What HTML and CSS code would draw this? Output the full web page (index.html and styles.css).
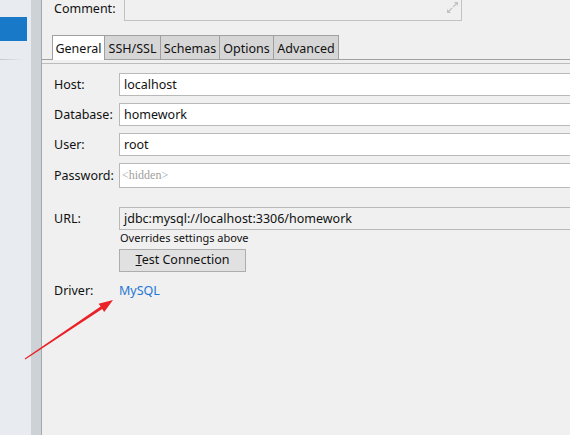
FILE: index.html
```html
<!DOCTYPE html>
<html>
<head>
<meta charset="utf-8">
<link rel="stylesheet" href="styles.css">
</head>
<body>
<div class="app">
  <aside class="sidebar">
    <div class="sel"></div>
    <div class="sep"></div>
  </aside>
  <div class="splitter"></div>
  <main class="main">
    <div class="comment-row">
      <span class="lbl comment-lbl">Comment:</span>
      <div class="textarea">
        <svg class="resize" width="13" height="13" viewBox="0 0 13 13">
          <path d="M7 6 L11.5 1.5" stroke="#c2c2c2" stroke-width="1.2" fill="none"/>
          <polygon points="8,1 12,1 12,5" fill="#c2c2c2"/>
          <path d="M6 7 L1.5 11.5" stroke="#c2c2c2" stroke-width="1.2" fill="none"/>
          <polygon points="1,8 1,12 5,12" fill="#c2c2c2"/>
        </svg>
      </div>
    </div>
    <div class="tabs">
      <div class="tab active t-general">General</div>
      <div class="tab t-ssh">SSH/SSL</div>
      <div class="tab t-schemas">Schemas</div>
      <div class="tab t-options">Options</div>
      <div class="tab t-adv">Advanced</div>
    </div>
    <div class="panel">
      <div class="row"><span class="lbl">Host:</span><div class="input">localhost</div></div>
      <div class="row"><span class="lbl">Database:</span><div class="input">homework</div></div>
      <div class="row"><span class="lbl">User:</span><div class="input">root</div></div>
      <div class="row pw"><span class="lbl">Password:</span><div class="input pw-input"><span class="hidden">&lt;hidden&gt;</span></div></div>
      <div class="row url"><span class="lbl">URL:</span><div class="input ro">jdbc:mysql://localhost:3306/homework</div></div>
      <div class="hint">Overrides settings above</div>
      <div class="btn-row"><button class="btn"><u>T</u>est Connection</button></div>
      <div class="driver-row"><span class="lbl">Driver:</span><span class="link">MySQL</span></div>
    </div>
  </main>
  <svg class="arrow" width="570" height="435" viewBox="0 0 570 435">
    <polygon points="24.7,358.6 100.6,306.6 98.6,303.7 113,300 104.2,312 102.2,309 25.3,359.4" fill="#ea2227"/>
  </svg>
</div>
</body>
</html>
```

FILE: styles.css
```css
* { box-sizing: border-box; }
html, body {
  margin: 0;
  padding: 0;
  width: 570px;
  height: 435px;
  overflow: hidden;
  background: #f0f0f0;
}
body {
  font-family: "Noto Sans", "Open Sans", sans-serif;
  font-size: 12.5px;
  color: #111;
}
.app {
  position: relative;
  display: flex;
  width: 570px;
  height: 435px;
}
.sidebar {
  width: 31px;
  background: #e8ecf0;
  display: flex;
  flex-direction: column;
}
.sel {
  margin-top: 17px;
  width: 27px;
  height: 24px;
  background: #1879c9;
}
.sep {
  margin-top: 18px;
  width: 24px;
  height: 1px;
  background: linear-gradient(to right, #c4c8cc, rgba(196,200,204,0));
}
.splitter {
  width: 11px;
  background: #cdd2d7;
  border-right: 1px solid #a3a8ad;
}
.main {
  flex: 1;
  background: #f0f0f0;
  overflow: hidden;
}
.comment-row {
  display: flex;
  height: 21px;
}
.lbl {
  display: inline-block;
  width: 65px;
  flex-shrink: 0;
  line-height: 16px;
  white-space: nowrap;
}
.comment-lbl {
  width: 70px;
  margin-left: 12px;
  margin-top: 1px;
}
.textarea {
  width: 338px;
  height: 21px;
  flex-shrink: 0;
  border: 1px solid #c2c2c2;
  border-top: none;
  background: #f0f0f0;
  display: flex;
  justify-content: flex-end;
  align-items: flex-start;
  padding: 1px 2px 0 0;
}
.tabs {
  display: flex;
  margin-top: 14px;
  padding-left: 10px;
  height: 25px;
  border-bottom: 1px solid #a0a0a0;
}
.tab {
  height: 24px;
  border: 1px solid #a0a0a0;
  border-bottom: none;
  background: #d6d6d6;
  text-align: center;
  line-height: 23px;
  padding-top: 1px;
  margin-left: -1px;
  white-space: nowrap;
}
.tab.active {
  background: #ffffff;
  height: 25px;
  margin-left: 0;
  position: relative;
  z-index: 1;
}
.t-general { width: 53px; }
.t-ssh { width: 57px; }
.t-schemas { width: 60px; }
.t-options { width: 55px; }
.t-adv { width: 66px; }
.panel {
  margin-top: 3px;
  border-top: 1px solid #bcbcbc;
  padding: 9px 0 0 12px;
}
.row {
  display: flex;
  align-items: center;
  height: 23px;
  margin-bottom: 7px;
}
.row.pw { height: 25px; margin-bottom: 19px; }
.row.url { margin-bottom: 0; }
.input {
  width: 470px;
  height: 100%;
  flex-shrink: 0;
  border: 1px solid #b9b9b9;
  background: #ffffff;
  padding-left: 4px;
  line-height: 21px;
  color: #111;
  white-space: nowrap;
}
.input.pw-input { padding-left: 2px; }
.input.ro { background: #f0f0f0; }
.hidden {
  font-family: "Liberation Serif", "DejaVu Serif", serif;
  font-size: 12px;
  color: #a0a0a0;
  line-height: 23px;
}
.hint {
  margin: 1px 0 0 66px;
  font-size: 11px;
  line-height: 14px;
}
.btn-row {
  margin: 4px 0 0 65px;
  display: flex;
}
.btn {
  display: block;
  width: 127px;
  height: 23px;
  background: #e1e1e1;
  border: 1px solid #adadad;
  font-family: "Noto Sans", "Open Sans", sans-serif;
  font-size: 12.5px;
  color: #111;
  padding: 0 0 2px 0;
  line-height: 19px;
}
.driver-row {
  display: flex;
  margin-top: 11px;
  line-height: 16px;
}
.link { color: #1e78d4; }
.arrow {
  position: absolute;
  left: 0;
  top: 0;
  pointer-events: none;
}
```
